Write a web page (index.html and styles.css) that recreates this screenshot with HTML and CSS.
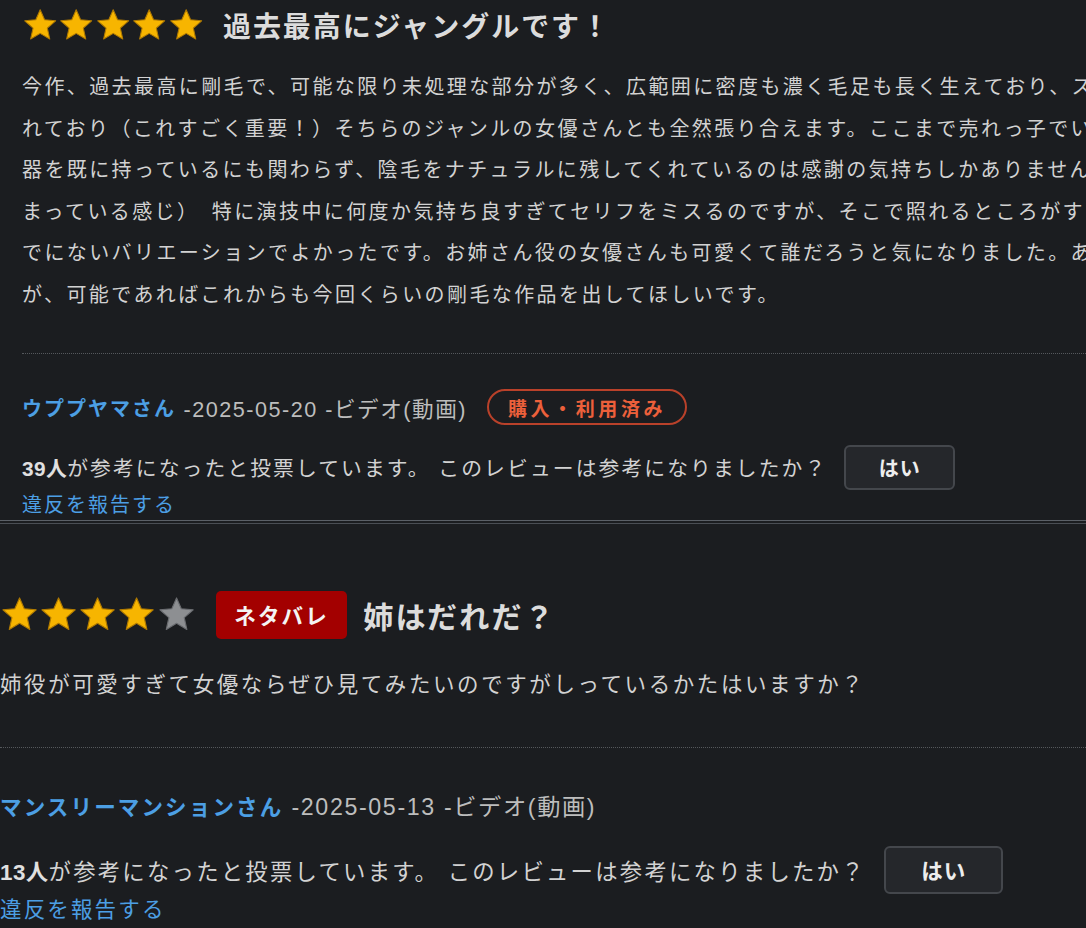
FILE: index.html
```html
<!DOCTYPE html>
<html lang="ja">
<head>
<meta charset="utf-8">
<link rel="stylesheet" href="styles.css">
</head>
<body>
<div class="page">
  <section class="review review--first">
    <div class="head">
      <div class="stars">
        <svg class="star on" viewBox="0 0 24 24"><polygon points="12,1.8 14.9,8.4 22.2,9.1 16.7,13.9 18.3,21.1 12,17.4 5.7,21.1 7.3,13.9 1.8,9.1 9.1,8.4"/></svg>
        <svg class="star on" viewBox="0 0 24 24"><polygon points="12,1.8 14.9,8.4 22.2,9.1 16.7,13.9 18.3,21.1 12,17.4 5.7,21.1 7.3,13.9 1.8,9.1 9.1,8.4"/></svg>
        <svg class="star on" viewBox="0 0 24 24"><polygon points="12,1.8 14.9,8.4 22.2,9.1 16.7,13.9 18.3,21.1 12,17.4 5.7,21.1 7.3,13.9 1.8,9.1 9.1,8.4"/></svg>
        <svg class="star on" viewBox="0 0 24 24"><polygon points="12,1.8 14.9,8.4 22.2,9.1 16.7,13.9 18.3,21.1 12,17.4 5.7,21.1 7.3,13.9 1.8,9.1 9.1,8.4"/></svg>
        <svg class="star on" viewBox="0 0 24 24"><polygon points="12,1.8 14.9,8.4 22.2,9.1 16.7,13.9 18.3,21.1 12,17.4 5.7,21.1 7.3,13.9 1.8,9.1 9.1,8.4"/></svg>
      </div>
      <h2 class="title">過去最高にジャングルです！</h2>
    </div>
    <p class="body"><span class="line">今作、過去最高に剛毛で、可能な限り未処理な部分が多く、広範囲に密度も濃く毛足も長く生えており、スタイルも維持さ</span><span class="line">れており（これすごく重要！）そちらのジャンルの女優さんとも全然張り合えます。ここまで売れっ子でいろいろな武</span><span class="line">器を既に持っているにも関わらず、陰毛をナチュラルに残してくれているのは感謝の気持ちしかありません（むしろ増してし</span><span class="line">まっている感じ）　特に演技中に何度か気持ち良すぎてセリフをミスるのですが、そこで照れるところがすごく可愛いです。今ま</span><span class="line">でにないバリエーションでよかったです。お姉さん役の女優さんも可愛くて誰だろうと気になりました。ありがとうございました。最後になります</span><span class="line">が、可能であればこれからも今回くらいの剛毛な作品を出してほしいです。</span></p>
    <div class="meta">
      <span class="name">ウププヤマさん</span><span class="date"> -2025-05-20 -ビデオ(動画)</span>
      <span class="purchased">購入・利用済み</span>
    </div>
    <div class="vote">
      <span class="vote-text"><b>39人</b>が参考になったと投票しています。 このレビューは参考になりましたか？</span>
      <button class="yes">はい</button>
    </div>
    <a class="report" href="#">違反を報告する</a>
  </section>
  <div class="separator"></div>
  <section class="review review--second">
    <div class="head">
      <div class="stars">
        <svg class="star on" viewBox="0 0 24 24"><polygon points="12,1.8 14.9,8.4 22.2,9.1 16.7,13.9 18.3,21.1 12,17.4 5.7,21.1 7.3,13.9 1.8,9.1 9.1,8.4"/></svg>
        <svg class="star on" viewBox="0 0 24 24"><polygon points="12,1.8 14.9,8.4 22.2,9.1 16.7,13.9 18.3,21.1 12,17.4 5.7,21.1 7.3,13.9 1.8,9.1 9.1,8.4"/></svg>
        <svg class="star on" viewBox="0 0 24 24"><polygon points="12,1.8 14.9,8.4 22.2,9.1 16.7,13.9 18.3,21.1 12,17.4 5.7,21.1 7.3,13.9 1.8,9.1 9.1,8.4"/></svg>
        <svg class="star on" viewBox="0 0 24 24"><polygon points="12,1.8 14.9,8.4 22.2,9.1 16.7,13.9 18.3,21.1 12,17.4 5.7,21.1 7.3,13.9 1.8,9.1 9.1,8.4"/></svg>
        <svg class="star off" viewBox="0 0 24 24"><polygon points="12,1.8 14.9,8.4 22.2,9.1 16.7,13.9 18.3,21.1 12,17.4 5.7,21.1 7.3,13.9 1.8,9.1 9.1,8.4"/></svg>
      </div>
      <span class="spoiler">ネタバレ</span>
      <h2 class="title">姉はだれだ？</h2>
    </div>
    <p class="body"><span class="line">姉役が可愛すぎて女優ならぜひ見てみたいのですがしっているかたはいますか？</span></p>
    <div class="meta">
      <span class="name">マンスリーマンションさん</span><span class="date"> -2025-05-13 -ビデオ(動画)</span>
    </div>
    <div class="vote">
      <span class="vote-text"><b>13人</b>が参考になったと投票しています。 このレビューは参考になりましたか？</span>
      <button class="yes">はい</button>
    </div>
    <a class="report" href="#">違反を報告する</a>
  </section>
</div>
</body>
</html>
```

FILE: styles.css
```css
html, body {
  margin: 0;
  padding: 0;
  background: #1b1d20;
}

body {
  font-family: "Liberation Sans", "Noto Sans CJK JP", sans-serif;
  color: #d2d2d2;
  overflow: hidden;
  height: 928px;
}

.page {
  width: 1086px;
  overflow: hidden;
}

.review {
  font-size: 20px;
  white-space: nowrap;
}

.review--first {
  padding-left: 22px;
}

.review--second {
  font-size: 21.5px;
  padding-top: 3em;
}

.head {
  display: flex;
  align-items: center;
  height: 2.5em;
}

.stars {
  display: flex;
  margin-right: 0.95em;
}

.star {
  width: 1.82em;
  height: 1.82em;
  display: block;
}

.star polygon {
  stroke-width: 0.7;
  stroke-linejoin: round;
}

.star.on polygon {
  fill: #f7b500;
  stroke: #b07a00;
}

.star.off polygon {
  fill: #8d8f92;
  stroke: #6a6c70;
}

.title {
  margin: 0;
  font-size: 1.4em;
  font-weight: 700;
  letter-spacing: 0.07em;
  color: #dcdcdc;
}

.spoiler {
  display: inline-flex;
  align-items: center;
  height: 2.2em;
  padding: 0 0.85em;
  margin-right: 0.75em;
  background: #a30000;
  color: #f4f4f4;
  font-weight: 700;
  letter-spacing: 0.1em;
  border-radius: 5px;
}

.body {
  margin: 0.85em 0 0;
  padding-bottom: 1.8em;
  line-height: 2.08em;
  letter-spacing: 0.12em;
  border-bottom: 1px dotted #55585c;
}

.line {
  display: block;
}

.review--second .body {
  margin-top: 1em;
}

.meta {
  display: flex;
  align-items: center;
  height: 1.85em;
  margin-top: 1.75em;
}

.name {
  color: #4c9fe4;
  font-weight: 700;
  letter-spacing: 0.1em;
}

.date {
  white-space: pre;
  color: #bdbdbd;
  font-size: 1.08em;
  letter-spacing: 0.07em;
}

.purchased {
  display: inline-flex;
  align-items: center;
  height: 1.85em;
  box-sizing: border-box;
  margin-left: 1.05em;
  padding: 0 1em;
  border: 2px solid #b9412a;
  border-radius: 1em;
  color: #ec603b;
  font-weight: 700;
  font-size: 0.95em;
  letter-spacing: 0.19em;
}

.vote {
  display: flex;
  align-items: center;
  margin-top: 0.95em;
}

.vote-text {
  font-size: 1.04em;
  letter-spacing: 0.1em;
}

.vote-text b {
  font-weight: 700;
  color: #e0e0e0;
  letter-spacing: 0.02em;
}

.yes {
  margin-left: 0.85em;
  width: 5.55em;
  height: 2.25em;
  background: #25272b;
  border: 2px solid #44474c;
  border-radius: 6px;
  color: #ededed;
  font-family: inherit;
  font-size: 1em;
  font-weight: 700;
  letter-spacing: 0.05em;
  padding: 0;
}

.report {
  display: block;
  color: #4c9fe4;
  text-decoration: none;
  line-height: 1.5em;
  letter-spacing: 0.1em;
}

.separator {
  height: 2px;
  border-top: 1px solid #5b6067;
  border-bottom: 1px solid #4a4e54;
}
```
